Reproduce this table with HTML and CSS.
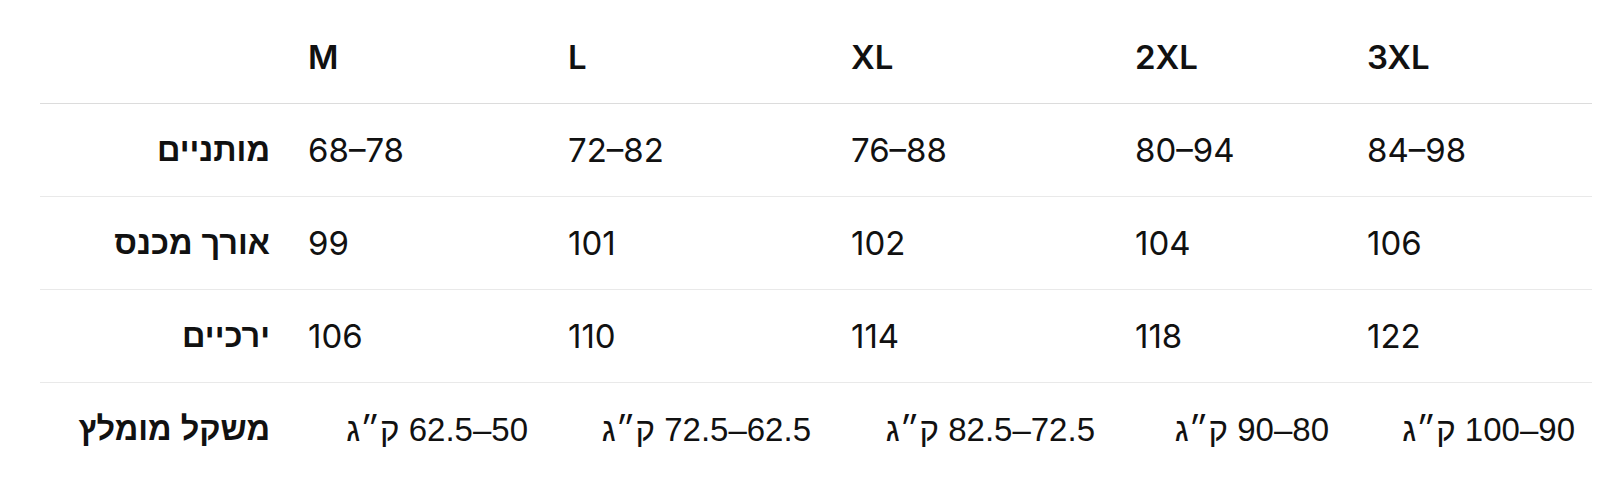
FILE: index.html
```html
<!DOCTYPE html>
<html lang="he">
<head>
<meta charset="utf-8">
<title>טבלת מידות</title>
<link rel="stylesheet" href="styles.css">
</head>
<body>
<div class="wrap">
<table class="sizes">
  <colgroup>
    <col class="c-label">
    <col class="c-m">
    <col class="c-l">
    <col class="c-xl">
    <col class="c-2xl">
    <col class="c-3xl">
  </colgroup>
  <thead>
    <tr>
      <th class="label"></th>
      <th>M</th>
      <th>L</th>
      <th>XL</th>
      <th>2XL</th>
      <th>3XL</th>
    </tr>
  </thead>
  <tbody>
    <tr>
      <th class="label" dir="rtl">מותניים</th>
      <td>68–78</td>
      <td>72–82</td>
      <td>76–88</td>
      <td>80–94</td>
      <td>84–98</td>
    </tr>
    <tr>
      <th class="label" dir="rtl">אורך מכנס</th>
      <td>99</td>
      <td>101</td>
      <td>102</td>
      <td>104</td>
      <td>106</td>
    </tr>
    <tr>
      <th class="label" dir="rtl">ירכיים</th>
      <td>106</td>
      <td>110</td>
      <td>114</td>
      <td>118</td>
      <td>122</td>
    </tr>
    <tr class="weight">
      <th class="label" dir="rtl">משקל מומלץ</th>
      <td dir="rtl">50–62.5 ק״ג</td>
      <td dir="rtl">62.5–72.5 ק״ג</td>
      <td dir="rtl">72.5–82.5 ק״ג</td>
      <td dir="rtl" class="tight">80–90 ק״ג</td>
      <td dir="rtl" class="tighter">90–100 ק״ג</td>
    </tr>
  </tbody>
</table>
</div>
</body>
</html>
```
FILE: styles.css
```css
html, body {
  margin: 0;
  padding: 0;
  background: #ffffff;
}

body {
  font-family: Inter, "Liberation Sans", sans-serif;
  color: #111111;
}

.wrap {
  padding: 11px 8px 0 40px;
}

.sizes {
  width: 1552px;
  table-layout: fixed;
  border-collapse: collapse;
  font-size: 33px;
}

.c-label { width: 248px; }
.c-m { width: 260px; }
.c-l { width: 283px; }
.c-xl { width: 284px; }
.c-2xl { width: 232px; }
.c-3xl { width: 245px; }

.sizes th,
.sizes td {
  height: 92px;
  padding: 0 20px;
  text-align: left;
  vertical-align: middle;
  white-space: nowrap;
  line-height: 1;
}

.sizes thead th {
  font-weight: 600;
  border-bottom: 1px solid #dcdcdc;
}

.sizes tbody td {
  font-weight: 400;
}

.sizes tbody tr {
  border-bottom: 1px solid #e9e9e9;
}

.sizes tbody tr.weight {
  border-bottom: none;
}

.sizes th.label {
  text-align: right;
  padding-right: 18px;
  font-family: "Liberation Sans", sans-serif;
  font-weight: 700;
  font-size: 32.5px;
}

.sizes tr.weight td {
  text-align: right;
  font-family: "Liberation Sans", sans-serif;
}

.sizes tr.weight td.tight {
  padding-right: 18px;
}

.sizes tr.weight td.tighter {
  padding-right: 17px;
}
```
